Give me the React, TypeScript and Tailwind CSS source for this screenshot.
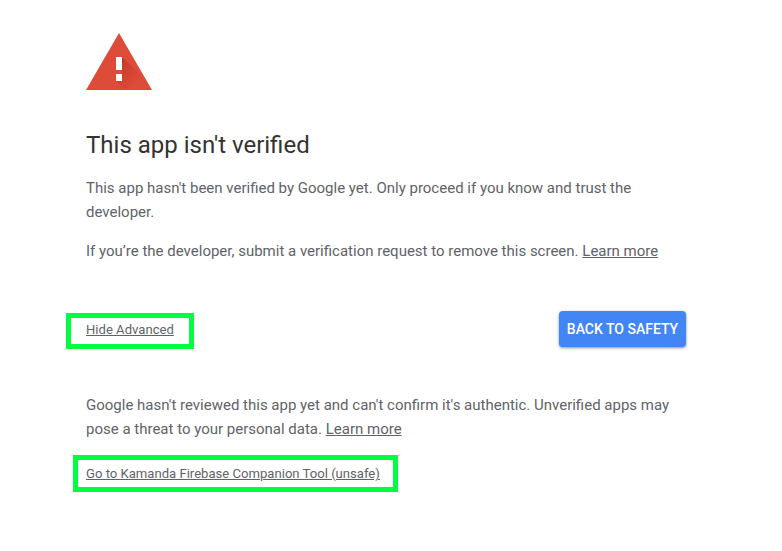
export default function App() {
  return (
    <div className="relative h-[551px] w-[782px] overflow-hidden bg-white font-['Roboto',sans-serif] text-[#5f6368]">
      <div className="flex w-[600px] flex-col ml-[86px] pt-[33px]">
        <svg width="66" height="57" viewBox="0 0 66 57" className="block">
          <defs>
            <linearGradient id="warnShadow" gradientUnits="userSpaceOnUse" x1="33" y1="30" x2="52" y2="49">
              <stop offset="0" stopColor="#a52714" stopOpacity="0.45" />
              <stop offset="1" stopColor="#a52714" stopOpacity="0" />
            </linearGradient>
          </defs>
          <path d="M33 0 L66 57 L0 57 Z" fill="#dd4b39" />
          <path d="M36 24 L60 48 L66 57 L39 57 L30 48 L36 48 Z" fill="url(#warnShadow)" />
          <rect x="30" y="24" width="6" height="13" fill="#fff" />
          <rect x="30" y="41" width="6" height="7" fill="#fff" />
        </svg>
        <h1 className="mt-[39px] text-[24px] leading-[32px] font-normal text-[#333333]">This app isn't verified</h1>
        <p className="mt-[15.25px] text-[15px] leading-[24px]">
          This app hasn't been verified by Google yet. Only proceed if you know and trust the developer.
        </p>
        <p className="mt-[15px] text-[15px] leading-[24.5px]">
          If you’re the developer, submit a verification request to remove this screen. <a className="underline">Learn more</a>
        </p>
        <div className="mt-[47.5px] flex items-center justify-between">
          <a className="pt-[1px] text-[13.1px] underline">Hide Advanced</a>
          <button className="h-[36px] w-[127px] rounded-[4px] bg-[#4285f4] text-[14px] font-medium text-white shadow-[0_1px_3px_rgba(0,0,0,0.45)]">
            BACK TO SAFETY
          </button>
        </div>
        <p className="mt-[46px] text-[15px] leading-[24px]">
          Google hasn't reviewed this app yet and can't confirm it's authentic. Unverified apps may pose a threat to your personal data. <a className="underline">Learn more</a>
        </p>
        <a className="mt-[23px] text-[13.1px] underline">Go to Kamanda Firebase Companion Tool (unsafe)</a>
      </div>
      <div className="absolute left-[66px] top-[313px] h-[36px] w-[128px] border-[5px] border-[#00ff40]" />
      <div className="absolute left-[73px] top-[455px] h-[37px] w-[325px] border-[5px] border-[#00ff40]" />
    </div>
  );
}
